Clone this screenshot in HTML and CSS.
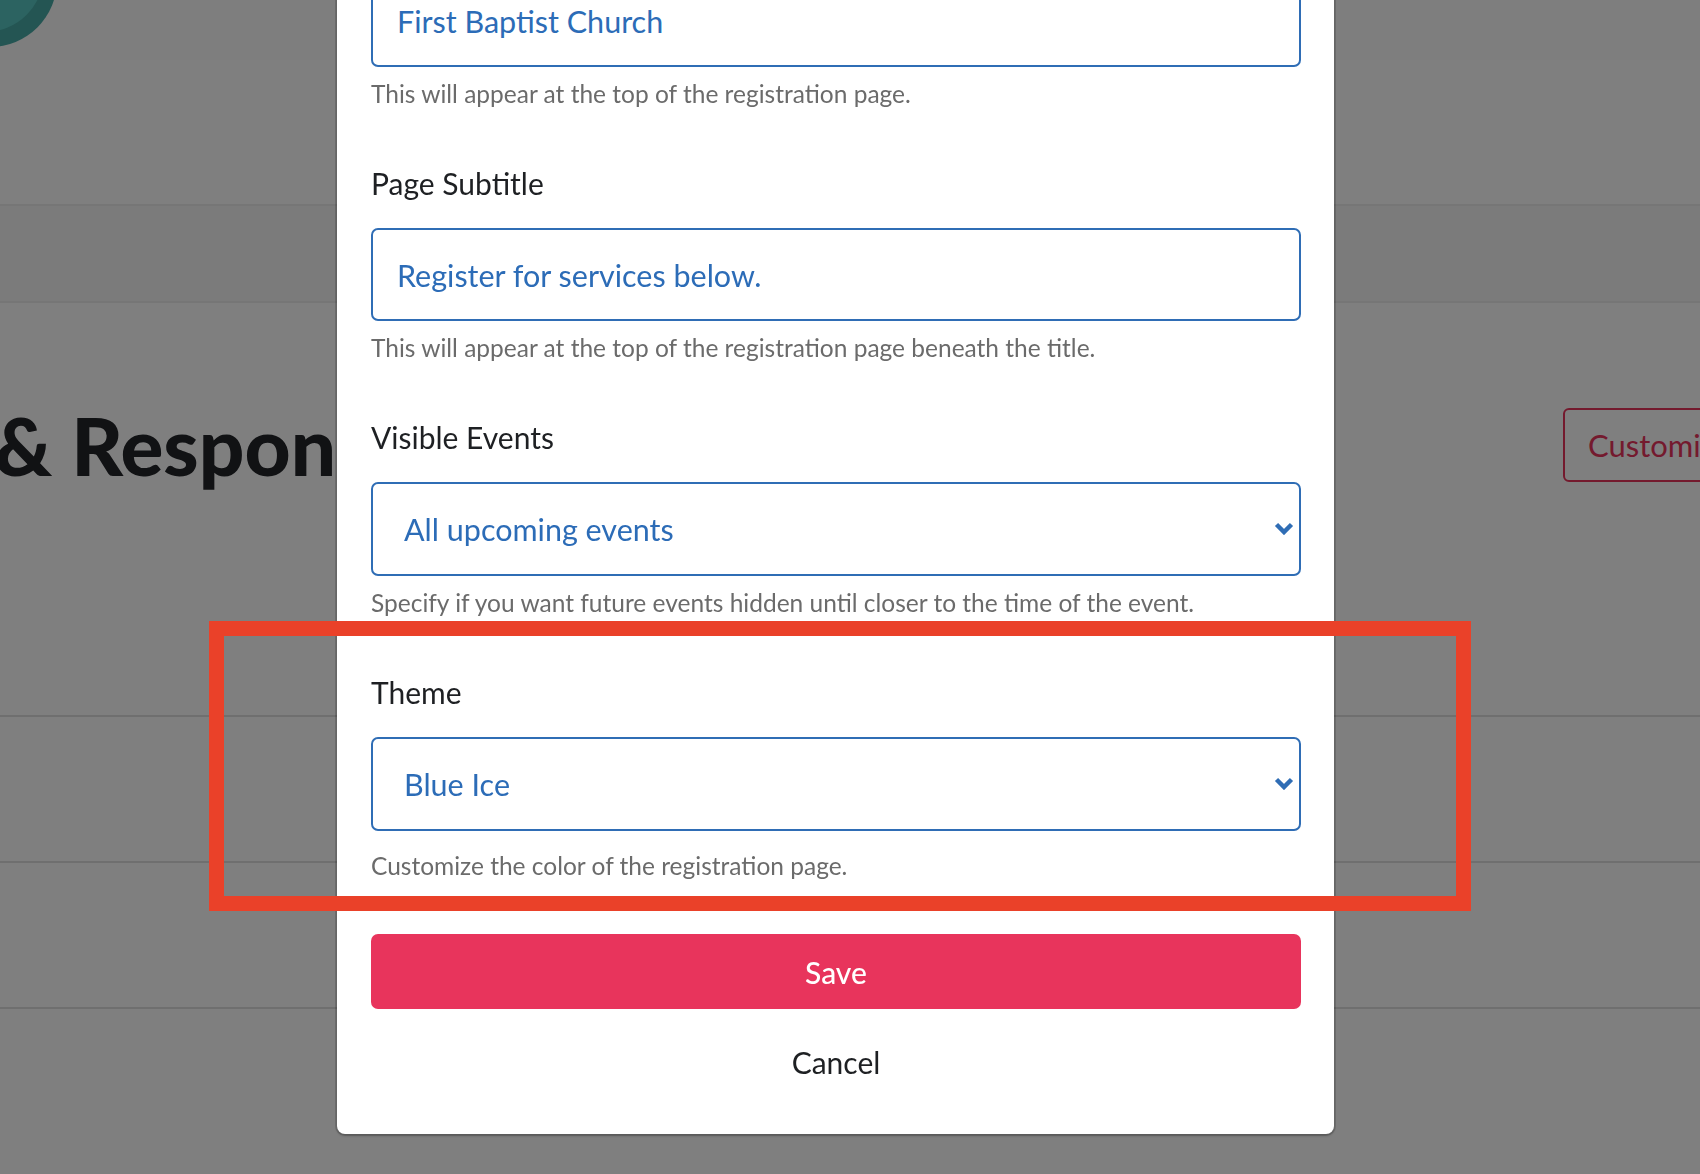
FILE: index.html
```html
<!DOCTYPE html>
<html>

  <head>
    <meta charset="UTF-8">
    <title>Registration Settings</title>
    <link rel="stylesheet" href="styles.css">
  </head>

  <body>
    <div id="page">
      <div id="topBar">
        <svg class="logo" width="70" height="60" viewBox="0 0 70 60">
          <circle cx="-10" cy="-20" r="67" fill="#48aaa6"/>
          <circle cx="-15" cy="-27" r="59" fill="#58c7c2"/>
        </svg>
      </div>
      <div id="navArea"></div>
      <div id="tabBand"></div>
      <div id="titleRow">
        <h1 id="pageTitle">&amp; Responses</h1>
        <button type="button" id="customizeButton">Customize</button>
      </div>
      <div id="list">
        <div class="listRow"></div>
        <div class="listRow"></div>
        <div class="listRow"></div>
      </div>
    </div>

    <div id="overlay">
      <div id="modal">
        <div class="field">
          <label class="fieldLabel">Page Title</label>
          <input class="fieldInput" type="text" value="First Baptist Church">
          <p class="fieldHelp">This will appear at the top of the registration page.</p>
        </div>
        <div class="field">
          <label class="fieldLabel">Page Subtitle</label>
          <input class="fieldInput" type="text" value="Register for services below.">
          <p class="fieldHelp">This will appear at the top of the registration page beneath the title.</p>
        </div>
        <div class="field">
          <label class="fieldLabel">Visible Events</label>
          <div class="selectWrap">
            <select class="fieldSelect">
              <option>All upcoming events</option>
            </select>
            <svg class="chevron" width="20" height="13" viewBox="0 0 20 13">
              <polyline points="2.5,2.5 10,10 17.5,2.5" fill="none" stroke="#2f6db5" stroke-width="4.5"/>
            </svg>
          </div>
          <p class="fieldHelp">Specify if you want future events hidden until closer to the time of the event.</p>
        </div>
        <div class="field">
          <label class="fieldLabel">Theme</label>
          <div class="selectWrap">
            <select class="fieldSelect">
              <option>Blue Ice</option>
            </select>
            <svg class="chevron" width="20" height="13" viewBox="0 0 20 13">
              <polyline points="2.5,2.5 10,10 17.5,2.5" fill="none" stroke="#2f6db5" stroke-width="4.5"/>
            </svg>
          </div>
          <p class="fieldHelp lastHelp">Customize the color of the registration page.</p>
        </div>
        <button type="button" id="saveButton">Save</button>
        <button type="button" id="cancelButton">Cancel</button>
      </div>
      <div id="highlight"></div>
    </div>
  </body>

</html>
```

FILE: styles.css
```css
      html, body {
	  margin: 0;
	  height: 100%;
	  overflow: hidden;
      }
      body {
	  background-color: white;
	  font-family: "Lato", "Liberation Sans", sans-serif;
      }
      #topBar {
	  height: 60px;
	  background-color: #fcfcfc;
      }
      .logo {
	  display: block;
      }
      #navArea {
	  height: 144px;
      }
      #tabBand {
	  height: 95px;
	  background-color: #f6f6f6;
	  border-top: 2px solid #ececec;
	  border-bottom: 2px solid #ececec;
      }
      #titleRow {
	  display: flex;
	  align-items: center;
	  margin-top: 102px;
	  margin-left: -6px;
      }
      #pageTitle {
	  width: 1569px;
	  flex: none;
	  margin: 0;
	  font-size: 80px;
	  line-height: 80px;
	  font-weight: 900;
	  color: #222428;
	  white-space: nowrap;
      }
      #customizeButton {
	  flex: none;
	  height: 74px;
	  padding: 0 23px;
	  background-color: white;
	  border: 2px solid #e8345c;
	  border-radius: 6px;
	  color: #e8345c;
	  font-family: inherit;
	  font-size: 31px;
	  white-space: nowrap;
      }
      #list {
	  margin-top: 86px;
      }
      .listRow {
	  height: 144px;
	  border-bottom: 2px solid #dedede;
      }

      /* modal layer */
      #overlay {
	  position: fixed;
	  top: 0;
	  left: 0;
	  width: 100%;
	  height: 100%;
	  background-color: rgba(0,0,0,0.5);
      }
      #modal {
	  box-sizing: border-box;
	  width: 997px;
	  margin-top: -123px;
	  margin-left: 337px;
	  padding: 34px 33px 35px 34px;
	  background-color: white;
	  border-radius: 8px;
	  box-shadow: 0 0 0 2px rgba(0,0,0,0.14), 0 2px 3px rgba(0,0,0,0.2);
      }
      .field + .field {
	  margin-top: 56px;
      }
      .fieldLabel {
	  display: block;
	  margin-bottom: 27px;
	  font-size: 30px;
	  line-height: 36px;
	  color: #1e2023;
      }
      .fieldInput, .fieldSelect {
	  display: block;
	  box-sizing: border-box;
	  width: 100%;
	  height: 93px;
	  margin: 0;
	  padding: 0 24px;
	  border: 2px solid #2f6db5;
	  border-radius: 7px;
	  background-color: white;
	  font-family: inherit;
	  font-size: 30.5px;
	  color: #2c6cb7;
	  outline: none;
      }
      .fieldSelect {
	  height: 94px;
	  padding-left: 31px;
	  -webkit-appearance: none;
	  appearance: none;
      }
      .selectWrap {
	  position: relative;
      }
      .chevron {
	  position: absolute;
	  top: 40px;
	  right: 7px;
	  pointer-events: none;
      }
      .fieldHelp {
	  margin: 12px 0 0 0;
	  font-size: 24.5px;
	  line-height: 30px;
	  color: #6b6b6b;
      }
      .lastHelp {
	  margin-top: 20px;
      }
      #saveButton {
	  display: block;
	  width: 100%;
	  height: 75px;
	  margin-top: 53px;
	  border: none;
	  border-radius: 7px;
	  background-color: #e8345c;
	  color: white;
	  font-family: inherit;
	  font-size: 30px;
	  font-weight: 500;
      }
      #cancelButton {
	  display: block;
	  width: 100%;
	  height: 74px;
	  margin-top: 16px;
	  border: none;
	  background-color: transparent;
	  color: #1e2023;
	  font-family: inherit;
	  font-size: 30px;
      }

      /* red annotation frame drawn over the screenshot */
      #highlight {
	  position: absolute;
	  top: 621px;
	  left: 209px;
	  box-sizing: border-box;
	  width: 1262px;
	  height: 290px;
	  border: 15px solid #ea4129;
	  pointer-events: none;
      }
```
